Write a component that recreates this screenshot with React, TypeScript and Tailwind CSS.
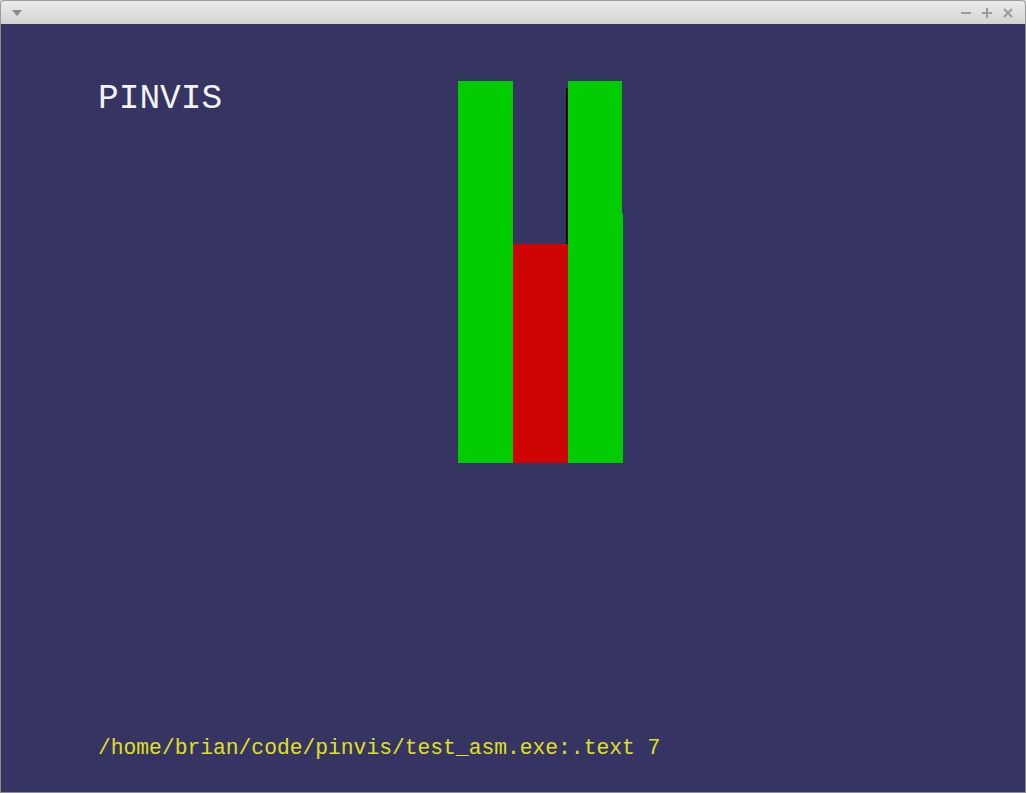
import React from "react";

function TitleBar() {
  return (
    <div className="flex h-[24px] items-center justify-between rounded-t-[5px] border border-b-0 border-[#9a9a9a] bg-gradient-to-b from-[#ececec] to-[#d2d2d2] px-[10px]">
      <svg width="10" height="6" viewBox="0 0 10 6" className="ml-[1px]">
        <path d="M0 0h10L5 6z" fill="#8a8a8a" />
      </svg>
      <div className="flex items-center gap-[11px] pr-[2px]">
        <svg width="10" height="10" viewBox="0 0 10 10">
          <path d="M0 5h10" stroke="#9a9a9a" strokeWidth="2" />
        </svg>
        <svg width="10" height="10" viewBox="0 0 10 10">
          <path d="M0 5h10M5 0v10" stroke="#9a9a9a" strokeWidth="2" />
        </svg>
        <svg width="10" height="10" viewBox="0 0 10 10">
          <path d="M1 1l8 8M9 1l-8 8" stroke="#9a9a9a" strokeWidth="2" />
        </svg>
      </div>
    </div>
  );
}

function Bars() {
  // left / middle / right columns, heights in px
  return (
    <svg width="166" height="382" viewBox="0 0 166 382" shapeRendering="crispEdges">
      <rect x="0" y="0" width="55" height="382" fill="#00cc00" />
      <rect x="55" y="163" width="55" height="219" fill="#cf0404" />
      <rect x="110" y="0" width="54" height="382" fill="#00cc00" />
      <rect x="164" y="133" width="1" height="249" fill="#00cc00" />
      <rect x="108" y="7" width="2" height="156" fill="#000000" />
    </svg>
  );
}

const mono = { fontFamily: '"Liberation Mono", "DejaVu Sans Mono", monospace' };

export default function App() {
  return (
    <div className="flex h-[793px] w-[1026px] flex-col bg-[#cfcfcf]">
      <TitleBar />
      <div className="flex flex-1 flex-col border-x border-b border-[#8c8c8c] bg-[#353463] pl-[96px] pb-[33px] pt-[57px]">
        <div className="flex items-start">
          <div className="ml-[1px] w-[360px] text-[34.5px] leading-[35px] text-[#f2f2f2]" style={mono}>
            PINVIS
          </div>
          <Bars />
        </div>
        <div className="ml-[1px] mt-auto text-[21.3px] leading-[21px] text-[#e0e020]" style={mono}>
          /home/brian/code/pinvis/test_asm.exe:.text 7
        </div>
      </div>
    </div>
  );
}
